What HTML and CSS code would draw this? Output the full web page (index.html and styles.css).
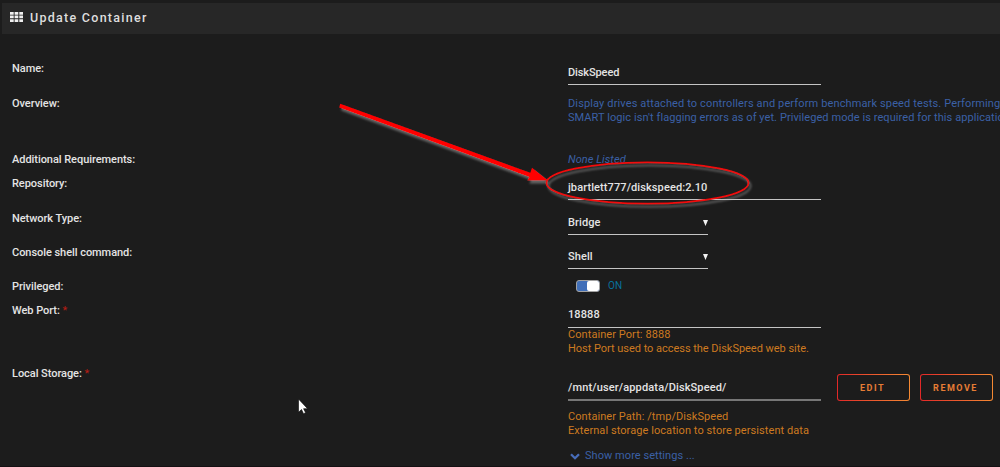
FILE: index.html
```html
<!DOCTYPE html>
<html lang="en">
<head>
<meta charset="utf-8">
<title>Update Container</title>
<link rel="stylesheet" href="styles.css">
</head>
<body>
<header class="title-bar">
  <svg class="grid-icon" width="13" height="10" viewBox="0 0 13 10"><path fill="#f0f0f0" d="M0 0h3.7v2.7H0zM4.6 0h3.7v2.7H4.6zM9.3 0H13v2.7H9.3zM0 3.6h3.7v2.7H0zM4.6 3.6h3.7v2.7H4.6zM9.3 3.6H13v2.7H9.3zM0 7.2h3.7v2.7H0zM4.6 7.2h3.7v2.7H4.6zM9.3 7.2H13v2.7H9.3z"/></svg>
  <h1 class="title">Update Container</h1>
</header>
<main class="form">
  <div class="row row-name">
    <div class="label">Name:</div>
    <div class="field"><div class="input name">DiskSpeed</div></div>
  </div>
  <div class="row row-overview">
    <div class="label">Overview:</div>
    <div class="field desc"><div class="desc-first">Display drives attached to controllers and perform benchmark speed tests. Performing</div><div>SMART logic isn't flagging errors as of yet. Privileged mode is required for this application</div></div>
  </div>
  <div class="row row-req">
    <div class="label">Additional Requirements:</div>
    <div class="field desc"><em>None Listed</em></div>
  </div>
  <div class="row row-repo">
    <div class="label">Repository:</div>
    <div class="field"><div class="input">jbartlett777/diskspeed:2.10</div></div>
  </div>
  <div class="row row-select">
    <div class="label">Network Type:</div>
    <div class="field"><div class="input select"><span>Bridge</span><svg class="caret" width="5" height="6" viewBox="0 0 5 6"><path fill="#f2f2f2" d="M0 0h5L2.5 6z"/></svg></div></div>
  </div>
  <div class="row row-select">
    <div class="label">Console shell command:</div>
    <div class="field"><div class="input select"><span>Shell</span><svg class="caret" width="5" height="6" viewBox="0 0 5 6"><path fill="#f2f2f2" d="M0 0h5L2.5 6z"/></svg></div></div>
  </div>
  <div class="row row-priv">
    <div class="label">Privileged:</div>
    <div class="field switch"><span class="track"><span class="knob"></span></span><span class="on">ON</span></div>
  </div>
  <div class="row row-port">
    <div class="label">Web Port: <span class="star">*</span></div>
    <div class="field"><div class="input port">18888</div><div class="help">Container Port: 8888</div><div class="help help-tight">Host Port used to access the DiskSpeed web site.</div></div>
  </div>
  <div class="row row-storage">
    <div class="label">Local Storage: <span class="star">*</span></div>
    <div class="field">
      <div class="path-line">
        <div class="input path">/mnt/user/appdata/DiskSpeed/</div>
        <div class="buttons"><button class="button">EDIT</button><button class="button">REMOVE</button></div>
      </div>
      <div class="path-help"><div class="help">Container Path: /tmp/DiskSpeed</div><div class="help">External storage location to store persistent data</div></div>
      <div class="more"><svg width="10" height="7" viewBox="0 0 10 7"><path d="M1 1.2 5 5.2 9 1.2" fill="none" stroke="#486dba" stroke-width="2.3"/></svg><span>Show more settings ...</span></div>
    </div>
  </div>
</main>
<div class="bottom-edge"></div>
<svg class="annotation" width="1000" height="467" viewBox="0 0 1000 467">
  <defs>
    <filter id="shadow" x="-10%" y="-20%" width="120%" height="150%"><feDropShadow dx="2" dy="3" stdDeviation="1.1" flood-color="#aaa" flood-opacity=".5"/></filter>
  </defs>
  <g filter="url(#shadow)">
    <path fill="#f00" d="M340.2 103.8 530.3 172.8 532 167.8 548 180.6 527.3 180.6 529.2 176.9 339.2 107.4z"/>
    <ellipse cx="647.5" cy="183" rx="101" ry="20.7" fill="none" stroke="#f00808" stroke-width="1.8"/>
  </g>
  <path d="M298.5 399v13.3l3-2.8 2 4.2 2.1-1-2-4h4z" fill="#fff" stroke="#080808" stroke-width=".6"/>
</svg>
</body>
</html>
```
FILE: styles.css
```css
* { box-sizing: border-box; }
body {
  margin: 0;
  height: 467px;
  overflow: hidden;
  position: relative;
  display: flex;
  flex-direction: column;
  background: #1c1c1c;
  color: #e4e4e4;
  font: 11px/14px Roboto, "Liberation Sans", sans-serif;
  white-space: nowrap;
}
.title-bar {
  flex: none;
  height: 31px;
  margin: 3px 0 0 2px;
  padding-left: 8px;
  display: flex;
  align-items: center;
  gap: 7px;
  background: #272727;
}
.grid-icon { margin-bottom: 4px; }
.title { margin: 0 0 2px; font-size: 12.5px; font-weight: 500; letter-spacing: 1.27px; color: #dedede; }
.form { flex: 1; padding: 28px 0 0 12px; }
.row { display: grid; grid-template-columns: 556px 432px; }
.row-name { height: 34.5px; }
.row-overview { height: 56.5px; }
.row-req { height: 24px; }
.row-repo { height: 34.5px; }
.row-select { height: 34px; }
.row-priv { height: 24.5px; }
.row-port { height: 63px; }
.label { font-weight: 500; letter-spacing: -.05px; }
.input {
  width: 253px;
  height: 23px;
  padding-top: 4px;
  border-bottom: 1px solid #c4c4c4;
  font-weight: 500;
  letter-spacing: .1px;
}
.name { letter-spacing: -.1px; }
.port { height: 24px; }
.select { width: 140px; display: flex; justify-content: space-between; }
.caret { margin-top: 4px; }
.desc { color: #3b60a6; letter-spacing: .07px; }
.desc-first { letter-spacing: .13px; }
.star { color: #b81c14; font-weight: 400; }
.switch { display: flex; align-items: flex-start; padding-left: 8px; }
.track { width: 24px; height: 12px; padding: 0; display: flex; justify-content: flex-end; background: #416fb8; border: 1px solid #a2a2a2; border-radius: 3px; }
.knob { width: 12px; background: #fff; border-radius: 2px; }
.on { margin: -1px 0 0 8px; font-size: 10px; letter-spacing: .2px; color: #08719c; }
.help { color: #cd7a20; letter-spacing: .07px; }
.help-tight { letter-spacing: -.03px; }
.path-line { display: flex; align-items: flex-start; gap: 16px; }
.path { height: 25px; margin-top: 9px; padding-top: 5px; border-bottom: 2px solid #777; letter-spacing: .14px; }
.buttons { display: flex; gap: 10px; margin-top: 7px; }
.button {
  width: 73px;
  height: 27px;
  padding: 0 2px 0 0;
  border: 1.5px solid transparent;
  border-radius: 3px;
  background: linear-gradient(#1c1c1c, #1c1c1c) padding-box, linear-gradient(90deg, #e22828, #f58a33) border-box;
  color: #e77d35;
  font: 700 9px/14px Roboto, sans-serif;
  letter-spacing: 1.5px;
}
.path-help { padding-top: 9px; }
.more { display: flex; align-items: center; gap: 5px; margin: 11px 0 0 2px; color: #3b60a6; letter-spacing: .05px; }
.bottom-edge { flex: none; height: 1px; background: #151013; }
.annotation { position: absolute; left: 0; top: 0; }
```
